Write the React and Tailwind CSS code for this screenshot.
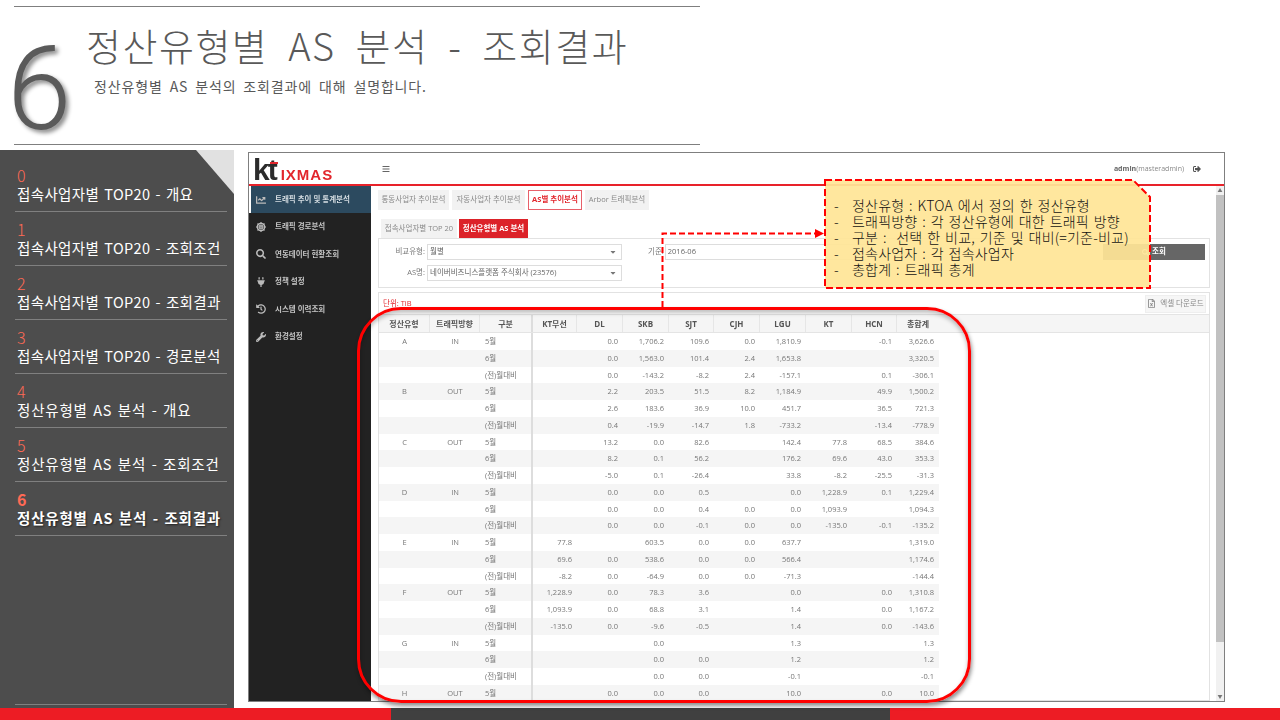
import React from "react";
import { FaChartLine, FaDharmachakra, FaSearch, FaPlug, FaHistory, FaWrench, FaBars, FaSignOutAlt, FaCaretDown, FaRegFileExcel } from "react-icons/fa";

const KR = "[font-family:'Noto_Sans_CJK_KR',sans-serif]";

const chapters = [
  ["0", "접속사업자별 TOP20 - 개요"],
  ["1", "접속사업자별 TOP20 - 조회조건"],
  ["2", "접속사업자별 TOP20 - 조회결과"],
  ["3", "접속사업자별 TOP20 - 경로분석"],
  ["4", "정산유형별 AS 분석 - 개요"],
  ["5", "정산유형별 AS 분석 - 조회조건"],
  ["6", "정산유형별 AS 분석 - 조회결과"],
];

const navItems = [
  [FaChartLine, "트래픽 추이 및 통계분석"],
  [FaDharmachakra, "트래픽 경로분석"],
  [FaSearch, "연동데이터 현황조회"],
  [FaPlug, "정책 설정"],
  [FaHistory, "시스템 이력조회"],
  [FaWrench, "환경설정"],
];

const columns = [
  ["정산유형", "w-[51px]"],
  ["트래픽방향", "w-[50px]"],
  ["구분", "w-[53px]"],
  ["KT무선", "w-[44px]"],
  ["DL", "w-[46px]"],
  ["SKB", "w-[46px]"],
  ["SJT", "w-[45px]"],
  ["CJH", "w-[46px]"],
  ["LGU", "w-[46px]"],
  ["KT", "w-[46px]"],
  ["HCN", "w-[45px]"],
  ["총합계", "w-[42px]"],
];

const rows = [
  ["A", "IN", "5월", "", "0.0", "1,706.2", "109.6", "0.0", "1,810.9", "", "-0.1", "3,626.6"],
  ["", "", "6월", "", "0.0", "1,563.0", "101.4", "2.4", "1,653.8", "", "", "3,320.5"],
  ["", "", "(전)월대비", "", "0.0", "-143.2", "-8.2", "2.4", "-157.1", "", "0.1", "-306.1"],
  ["B", "OUT", "5월", "", "2.2", "203.5", "51.5", "8.2", "1,184.9", "", "49.9", "1,500.2"],
  ["", "", "6월", "", "2.6", "183.6", "36.9", "10.0", "451.7", "", "36.5", "721.3"],
  ["", "", "(전)월대비", "", "0.4", "-19.9", "-14.7", "1.8", "-733.2", "", "-13.4", "-778.9"],
  ["C", "OUT", "5월", "", "13.2", "0.0", "82.6", "", "142.4", "77.8", "68.5", "384.6"],
  ["", "", "6월", "", "8.2", "0.1", "56.2", "", "176.2", "69.6", "43.0", "353.3"],
  ["", "", "(전)월대비", "", "-5.0", "0.1", "-26.4", "", "33.8", "-8.2", "-25.5", "-31.3"],
  ["D", "IN", "5월", "", "0.0", "0.0", "0.5", "", "0.0", "1,228.9", "0.1", "1,229.4"],
  ["", "", "6월", "", "0.0", "0.0", "0.4", "0.0", "0.0", "1,093.9", "", "1,094.3"],
  ["", "", "(전)월대비", "", "0.0", "0.0", "-0.1", "0.0", "0.0", "-135.0", "-0.1", "-135.2"],
  ["E", "IN", "5월", "77.8", "", "603.5", "0.0", "0.0", "637.7", "", "", "1,319.0"],
  ["", "", "6월", "69.6", "0.0", "538.6", "0.0", "0.0", "566.4", "", "", "1,174.6"],
  ["", "", "(전)월대비", "-8.2", "0.0", "-64.9", "0.0", "0.0", "-71.3", "", "", "-144.4"],
  ["F", "OUT", "5월", "1,228.9", "0.0", "78.3", "3.6", "", "0.0", "", "0.0", "1,310.8"],
  ["", "", "6월", "1,093.9", "0.0", "68.8", "3.1", "", "1.4", "", "0.0", "1,167.2"],
  ["", "", "(전)월대비", "-135.0", "0.0", "-9.6", "-0.5", "", "1.4", "", "0.0", "-143.6"],
  ["G", "IN", "5월", "", "", "0.0", "", "", "1.3", "", "", "1.3"],
  ["", "", "6월", "", "", "0.0", "0.0", "", "1.2", "", "", "1.2"],
  ["", "", "(전)월대비", "", "", "0.0", "0.0", "", "-0.1", "", "", "-0.1"],
  ["H", "OUT", "5월", "", "0.0", "0.0", "0.0", "", "10.0", "", "0.0", "10.0"],
];

const notes = [
  "정산유형 : KTOA 에서 정의 한 정산유형",
  "트래픽방향 : 각 정산유형에 대한 트래픽 방향",
  "구분 :  선택 한 비교, 기준 및 대비(=기준-비교)",
  "접속사업자 : 각 접속사업자",
  "총합계 : 트래픽 총계",
];

function SelectBox({ label, value }) {
  return (
    <div className="flex items-center h-[16px]">
      <span className="w-[46px] text-right pr-[1px] text-[#777]">{label}</span>
      <div className="ml-[1px] w-[195px] h-full border border-[#ddd] flex items-center justify-between px-[2px] text-[#666]">
        <span>{value}</span>
        <FaCaretDown className="text-[#777] mr-[2px] text-[8px]" />
      </div>
    </div>
  );
}

function Cell({ col, value }) {
  let align = "text-right pr-[5px]";
  if (col < 2) align = "text-center";
  if (col === 2) align = "text-left pl-[5px] border-r-2 border-[#ddd]";
  return <div className={`${columns[col][1]} shrink-0 ${align}`}>{value}</div>;
}

function FrameScreen() {
  return (
    <div className="ml-[14px] mt-[2px] w-[977px] h-[550px] border border-[#7f7f7f] bg-white flex flex-col overflow-hidden blur-[0.35px] text-[7.5px] leading-none [font-family:'Open_Sans','Noto_Sans_CJK_KR',sans-serif]">
      {/* top bar */}
      <div className="h-[33px] shrink-0 border-b-2 border-[#e8222a] flex items-center">
        <div className="w-[122px] pl-[4px] pt-[3px] flex items-end text-[#2b2b2b] relative">
          <span className="text-[30px] font-bold tracking-[-2px] leading-[26px] [font-family:'Liberation_Sans',sans-serif]">kt</span>
          <span className="absolute left-[21px] top-[8px] w-[8px] h-[2px] bg-[#e2262c]" />
          <span className="ml-[5px] text-[15px] font-bold text-[#e2262c] tracking-[1px] leading-[17px] [font-family:'Liberation_Sans',sans-serif]">IXMAS</span>
        </div>
        <FaBars className="ml-[11px] text-[8px] text-[#666]" />
        <div className="ml-auto flex items-center text-[7px] text-[#888] pr-[23px]">
          <b className="text-[#666]">admin</b>(masteradmin)
          <FaSignOutAlt className="ml-[9px] text-[8px] text-[#555]" />
        </div>
      </div>

      <div className="flex flex-1 min-h-0">
        {/* left nav */}
        <div className="w-[122px] shrink-0 bg-[#222] flex flex-col">
          {navItems.map(([Icon, label], i) => (
            <div
              key={label}
              className={`h-[27.4px] flex items-center font-bold text-[7.5px] ${i === 0 ? "bg-[#2c4a5f] text-[#d5dde2] border-l-2 border-white pl-[4px]" : "text-[#c4c4c4] pl-[6px]"}`}
            >
              <span className="w-[20px] flex justify-start pl-[1px]">
                <Icon className="text-[10px] text-[#bbb]" />
              </span>
              {label}
            </div>
          ))}
        </div>

        {/* content */}
        <div className="flex-1 min-w-0 flex">
          <div className="flex-1 min-w-0 pl-[7px] pr-[6px] pt-[4px] flex flex-col">
            <div className="flex gap-[3px] h-[20px] shrink-0 text-[#888]">
              <div className="w-[71px] bg-[#f2f2f2] flex items-center justify-center">통동사업자 추이분석</div>
              <div className="w-[73px] bg-[#f2f2f2] flex items-center justify-center">자동사업자 추이분석</div>
              <div className="w-[54px] bg-white border border-[#e8606a] text-[#e2262c] font-bold flex items-center justify-center">AS별 추이분석</div>
              <div className="w-[64px] bg-[#f2f2f2] flex items-center justify-center">Arbor 트래픽분석</div>
            </div>
            <div className="flex gap-[2px] h-[19px] mt-[9px] ml-[3px] shrink-0">
              <div className="w-[76px] bg-[#f2f2f2] text-[#888] flex items-center justify-center">접속사업자별 TOP 20</div>
              <div className="w-[69px] bg-[#dc2229] text-white font-bold flex items-center justify-center">정산유형별 AS 분석</div>
            </div>

            {/* filter panel */}
            <div className="h-[50px] shrink-0 border border-[#e2e2e2] relative pl-[1px] pt-[5px] flex">
              <div className="flex flex-col gap-[5px]">
                <SelectBox label="비교유형:" value="월별" />
                <SelectBox label="AS명:" value="네이버비즈니스플랫폼 주식회사 (23576)" />
              </div>
              <div className="ml-[26px] h-[16px] flex items-center text-[#777]">
                기준:
                <div className="ml-[1px] w-[204px] h-full border border-[#ddd] flex items-center px-[2px] text-[#666]">2016-06</div>
              </div>
              <div className="ml-auto mr-[4px] w-[102px] h-[16px] bg-[#666] text-white font-bold flex items-center justify-center gap-[3px]">
                <FaSearch className="text-[7px]" />
                조회
              </div>
            </div>

            {/* result panel */}
            <div className="mt-[4px] flex-1 min-h-0 border border-[#e2e2e2] flex flex-col overflow-hidden">
              <div className="h-[21px] shrink-0 flex items-center justify-between pl-[4px] pr-[3px]">
                <span className="text-[#e2262c] mt-[1px]">단위: TiB</span>
                <div className="w-[61px] h-[18px] bg-[#f6f6f6] border border-[#eee] flex items-center justify-center gap-[4px] text-[#888]">
                  <FaRegFileExcel className="text-[9px]" />
                  엑셀 다운로드
                </div>
              </div>
              <div className="h-[19px] shrink-0 bg-[#f5f5f5] border-y border-[#e4e4e4] flex font-bold text-[8px] text-[#555]">
                {columns.map(([name, width], i) => (
                  <div key={name} className={`${width} shrink-0 flex items-center justify-center border-r ${i === 2 ? "border-r-2 border-[#ddd]" : "border-[#e6e6e6]"} ${i === 11 ? "border-r-0" : ""}`}>
                    {name}
                  </div>
                ))}
              </div>
              <div className="text-[#777] w-[560px]">
                {rows.map((row, r) => (
                  <div key={r} className={`h-[16.75px] leading-[16.75px] flex ${r % 2 === 1 ? "bg-[#f5f5f5]" : "bg-white"}`}>
                    {row.map((v, c) => (
                      <Cell key={c} col={c} value={v} />
                    ))}
                  </div>
                ))}
              </div>
            </div>
          </div>

          {/* scrollbar */}
          <div className="w-[8px] shrink-0 bg-[#f1f1f1] flex flex-col items-center">
            <span className="text-[5px] text-[#777] h-[9px] leading-[9px]">▲</span>
            <div className="w-full h-[447px] bg-[#c1c1c1]" />
            <span className="mt-auto text-[5px] text-[#777] h-[9px] leading-[9px]">▼</span>
          </div>
        </div>
      </div>
    </div>
  );
}

export default function App() {
  return (
    <div className={`relative w-[1280px] h-[720px] bg-white overflow-hidden flex flex-col ${KR}`}>
      {/* slide title */}
      <div className="ml-[14px] mr-[580px] mt-[6px] h-[139px] shrink-0 border-y border-[#7f7f7f] flex">
        <div className="w-[79px] shrink-0 text-[116px] leading-none mt-[24px] -ml-[7px] text-[#5a5a5a] font-light [font-family:'Roboto',sans-serif] [text-shadow:3px_3px_4px_rgba(0,0,0,0.45)]">6</div>
        <div className="pt-[13px]">
          <h1 className="text-[38px] leading-[50px] font-light text-[#595959] tracking-[1.5px] [word-spacing:10px] whitespace-nowrap">정산유형별 AS 분석 - 조회결과</h1>
          <p className="ml-[8px] mt-[6px] text-[14px] leading-[20px] text-[#595959] tracking-[0.85px] [word-spacing:3px]">정산유형별 AS 분석의 조회결과에 대해 설명합니다.</p>
        </div>
      </div>

      <div className="flex h-[563px] pt-[5px] shrink-0">
        {/* chapter list */}
        <div className="relative w-[234px] h-[558px] shrink-0 bg-[#4d4d4d] pl-[15px] pr-[7px] pt-[8px] flex flex-col">
          <svg className="absolute top-0 right-0" width="38" height="44" viewBox="0 0 38 44">
            <polygon points="0,0 38,0 38,44" fill="#e1e1e1" />
          </svg>
          {chapters.map(([n, label], i) => (
            <div key={n} className="h-[54px] shrink-0 border-b border-[#808080] pl-[2px] pt-[8px]">
              <div className={`text-[#ff6a55] text-[16px] leading-[19px] ${i === 6 ? "font-bold" : "font-light"}`}>{n}</div>
              <div className={`text-[14.5px] leading-[18px] whitespace-nowrap text-white [word-spacing:1.5px] ${i < 4 ? "tracking-[0.35px]" : "tracking-[0.8px]"} ${i === 6 ? "font-bold [text-shadow:1px_1px_2px_rgba(0,0,0,0.6)]" : ""}`}>{label}</div>
            </div>
          ))}
          <div className="mt-auto mb-[3px] border-b border-[#808080]" />
        </div>
        <FrameScreen />
      </div>

      {/* footer strip */}
      <div className="absolute left-0 right-0 bottom-0 h-[12px] flex">
        <div className="w-[391px] bg-[#ed1c24]" />
        <div className="w-[499px] bg-[#404040]" />
        <div className="flex-1 bg-[#ed1c24]" />
      </div>

      {/* red highlight round the table */}
      <div className="absolute left-[357px] top-[307px] w-[614px] h-[396px] rounded-[44px] border-[3.5px] border-[#ff0000] shadow-[1px_3px_4px_rgba(0,0,0,0.45),inset_0_3px_4px_rgba(0,0,0,0.25)]" />

      {/* dashed leader to the note */}
      <svg className="absolute left-[655px] top-[225px]" width="175" height="84" viewBox="0 0 175 84">
        <path d="M7.5 82 V8.5 H160" fill="none" stroke="#ff0000" strokeWidth="2" strokeDasharray="6 3" />
        <polygon points="160,4 169,8.5 160,13" fill="#ff0000" />
      </svg>

      {/* note */}
      <div className="absolute left-[824px] top-[179px] w-[327px] h-[110px]">
        <svg className="absolute inset-0" width="327" height="110" viewBox="0 0 327 110">
          <polygon points="1,1 309,1 326,18 326,109 1,109" fill="#ffe597" fillOpacity="0.93" stroke="#ff0000" strokeWidth="2" strokeDasharray="7 3" />
        </svg>
        <ul className="relative pt-[18px] pl-[10px] text-[14px] font-light leading-[16.1px] text-[#111] tracking-[0.2px] [word-spacing:1.5px]">
          {notes.map((t) => (
            <li key={t} className="flex whitespace-pre">
              <span className="w-[18px]">-</span>
              {t}
            </li>
          ))}
        </ul>
      </div>
    </div>
  );
}
